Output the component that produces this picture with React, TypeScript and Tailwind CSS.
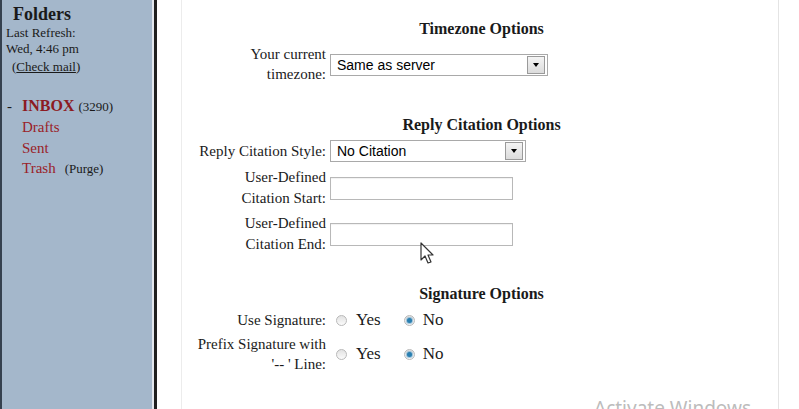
import React from "react";

const serif = { fontFamily: '"Liberation Serif", "Times New Roman", serif' } as const;
const sans = { fontFamily: '"Liberation Sans", Arial, sans-serif' } as const;

function Select({ value, width }: { value: string; width: number }) {
  return (
    <div
      className="flex h-[22px] items-center justify-between border border-[#a9a9a9] bg-white pl-[6px] pr-[2px] text-[14px] text-black"
      style={{ ...sans, width }}
    >
      <span>{value}</span>
      <div className="flex h-[18px] w-[18px] items-center justify-center border border-[#9a9a9a] bg-gradient-to-b from-[#f4f4f4] to-[#dcdcdc]">
        <div className="h-0 w-0 border-l-[3px] border-r-[3px] border-t-[4px] border-l-transparent border-r-transparent border-t-black" />
      </div>
    </div>
  );
}

function TextInput() {
  return <div className="h-[23px] w-[183px] border border-[#b8b8b8] bg-white shadow-[inset_0_1px_1px_rgba(0,0,0,0.06)]" />;
}

function Radio({ checked }: { checked?: boolean }) {
  return (
    <div className="flex h-[11px] w-[11px] items-center justify-center rounded-full border border-[#b9b9b9] bg-gradient-to-b from-[#e2e2e2] to-[#fbfbfb]">
      {checked && <div className="h-[5px] w-[5px] rounded-full bg-[#2a7fb0] shadow-[0_0_1px_1px_rgba(60,140,190,0.5)]" />}
    </div>
  );
}

function RadioPair() {
  return (
    <div className="flex h-[20px] items-center pl-[6px] text-[17px] leading-[20px]">
      <Radio />
      <span className="ml-[9px]">Yes</span>
      <div className="ml-[23px]">
        <Radio checked />
      </div>
      <span className="ml-[8px]">No</span>
    </div>
  );
}

function Row({ label, children, leading = "leading-[20px]" }: { label: React.ReactNode; children: React.ReactNode; leading?: string }) {
  return (
    <div className="flex items-center">
      <div className={`w-[137px] shrink-0 whitespace-nowrap text-right ${leading}`}>{label}</div>
      <div className="ml-[4px]">{children}</div>
    </div>
  );
}

function Title({ children }: { children: React.ReactNode }) {
  return <div className="w-[585px] text-center text-[16px] font-bold leading-[20px]">{children}</div>;
}

export default function App() {
  return (
    <div className="relative flex h-[409px] w-[799px] overflow-hidden bg-white text-[#1a1a1a]" style={serif}>
      {/* Sidebar */}
      <div className="h-full w-[152px] shrink-0 border-l-2 border-[#35414f] bg-[#a4b7cb]">
        <div className="pl-[11px] pt-[4px] text-[18px] font-bold leading-[20px]">Folders</div>
        <div className="pl-[4px] text-[13px] leading-[16px]">
          <div className="mt-[1px]">Last Refresh:</div>
          <div>Wed, 4:46 pm</div>
          <div className="mt-[2px] pl-[6px]">
            (<span className="underline">Check mail</span>)
          </div>
        </div>
        <div className="mt-[21px] pl-[5px]">
          <div className="flex items-baseline leading-[20px]">
            <span className="w-[15px] text-[15px]">-</span>
            <span className="text-[16px] font-bold text-[#8c1a22]">INBOX</span>
            <span className="ml-[4px] text-[13px]">(3290)</span>
          </div>
          <div className="pl-[15px] text-[15px] leading-[20.5px] text-[#9a2228]">
            <div>Drafts</div>
            <div>Sent</div>
            <div className="flex items-baseline">
              <span>Trash</span>
              <span className="ml-[9px] text-[13px] text-[#1a1a1a]">(Purge)</span>
            </div>
          </div>
        </div>
      </div>
      {/* Divider */}
      <div className="h-full w-[2px] shrink-0 bg-[#e4e8ee]" />
      <div className="h-full w-[3px] shrink-0 bg-[#202020]" />
      {/* Main */}
      <div className="flex h-full flex-1">
        <div className="w-[25px] shrink-0 border-r border-[#ececec]" />
        <div className="w-[597px] shrink-0 border-r border-[#e4e4e4] pl-[7px] text-[15px]">
          <div className="pt-[19px]">
            <Title>Timezone Options</Title>
            <div className="mt-[5px]">
              <Row
                label={
                  <>
                    Your current
                    <br />
                    timezone:
                  </>
                }
              >
                <div className="mt-[2px]">
                  <Select value="Same as server" width={218} />
                </div>
              </Row>
            </div>
            <div className="mt-[31px]">
              <Title>Reply Citation Options</Title>
            </div>
            <div className="mt-[5px]">
              <Row label="Reply Citation Style:">
                <Select value="No Citation" width={196} />
              </Row>
            </div>
            <div className="mt-[5px]">
              <Row
                leading="leading-[21px]"
                label={
                  <>
                    User-Defined
                    <br />
                    Citation Start:
                  </>
                }
              >
                <TextInput />
              </Row>
            </div>
            <div className="mt-[4px]">
              <Row
                leading="leading-[21px]"
                label={
                  <>
                    User-Defined
                    <br />
                    Citation End:
                  </>
                }
              >
                <TextInput />
              </Row>
            </div>
            <div className="mt-[29px]">
              <Title>Signature Options</Title>
            </div>
            <div className="mt-[6px]">
              <Row label="Use Signature:">
                <RadioPair />
              </Row>
            </div>
            <div className="mt-[4px]">
              <Row
                label={
                  <>
                    Prefix Signature with
                    <br />
                    '-- ' Line:
                  </>
                }
              >
                <RadioPair />
              </Row>
            </div>
          </div>
        </div>
        <div className="flex-1" />
      </div>
      {/* Mouse cursor */}
      <svg className="absolute left-[420px] top-[242px]" width="16" height="24" viewBox="0 0 16 24">
        <path d="M1 1 L1 18 L5 14 L8 21 L11 20 L8 13 L13 13 Z" fill="white" stroke="#333" strokeWidth="1.2" strokeLinejoin="round" />
      </svg>
      {/* Watermark */}
      <div
        className="absolute left-[594px] top-[396px] text-[19px] leading-[24px] text-[#bcbcbc]"
        style={{ fontFamily: '"Noto Sans", "Open Sans", sans-serif' }}
      >
        Activate Windows
      </div>
    </div>
  );
}
